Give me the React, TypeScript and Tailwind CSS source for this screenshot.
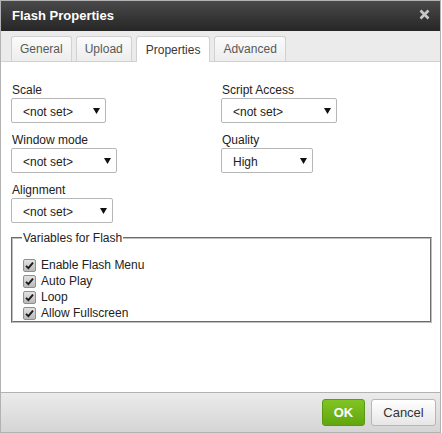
import React from "react";

function Arrow() {
  return (
    <svg width="7" height="7" viewBox="0 0 7 7" className="shrink-0">
      <polygon points="0,1 7,1 3.5,7" fill="#111" />
    </svg>
  );
}

function Select({ value, width }: { value: string; width: number }) {
  return (
    <div
      className="h-[25px] border border-[#b6b6b6] rounded-[2px] bg-white flex items-center justify-between pl-[11px] pr-[5px] text-[12px] text-[#222]"
      style={{ width }}
    >
      <span className="pt-[2px]">{value}</span>
      <Arrow />
    </div>
  );
}

function Field({ label, value, width }: { label: string; value: string; width: number }) {
  return (
    <div className="flex flex-col">
      <div className="text-[12px] leading-[13px] text-[#222] pl-[1px] mb-[1px]">{label}</div>
      <Select value={value} width={width} />
    </div>
  );
}

function Check({ label }: { label: string }) {
  return (
    <div className="flex items-center h-[16px]">
      <div className="w-[13px] h-[13px] rounded-[2px] border border-[#8f8f8f] bg-linear-to-b from-[#e2e2e2] to-[#b9b9b9] flex items-center justify-center">
        <svg width="9" height="9" viewBox="0 0 9 9">
          <path d="M1 4.8 L3.4 7.2 L8 1.6" stroke="#1a1a1a" strokeWidth="1.9" fill="none" />
        </svg>
      </div>
      <span className="ml-[5px] text-[12px] text-[#222]">{label}</span>
    </div>
  );
}

export default function App() {
  const tabs = ["General", "Upload", "Properties", "Advanced"];
  return (
    <div className="w-[442px] h-[433px] bg-white" style={{ fontFamily: '"Liberation Sans", Arial, sans-serif' }}>
      <div className="w-[441px] h-[433px] border border-[#b2b2b2] flex flex-col">
        {/* Title bar */}
        <div className="h-[30px] bg-linear-to-b from-[#4a4a4a] to-[#262626] flex items-center justify-between pl-[11px] pr-[10px] shrink-0">
          <span className="text-white font-bold text-[13px]">Flash Properties</span>
          <svg width="11" height="11" viewBox="0 0 11 11" className="mb-[3px]">
            <path d="M1.5 1.5 L9.5 9.5 M9.5 1.5 L1.5 9.5" stroke="#c8c8c8" strokeWidth="2.6" />
          </svg>
        </div>
        {/* Tabs */}
        <div className="h-[31px] bg-[#ebebeb] border-b border-[#d1d1d1] flex items-end pl-[10px] gap-[4px] shrink-0">
          {tabs.map((t) => {
            const active = t === "Properties";
            return (
              <div
                key={t}
                className={
                  active
                    ? "h-[26px] mb-[-1px] px-[9px] flex items-center bg-white border border-b-0 border-[#d1d1d1] rounded-t-[3px] text-[12px] text-[#383838]"
                    : "h-[25px] px-[8px] flex items-center bg-linear-to-b from-[#fbfbfb] to-[#ededed] border border-b-0 border-[#d1d1d1] rounded-t-[3px] text-[12px] text-[#595959]"
                }
              >
                {t}
              </div>
            );
          })}
        </div>
        {/* Content */}
        <div className="flex-1 bg-white pl-[10px] pr-[8px] pt-[22px]">
          <div className="grid grid-cols-[210px_1fr] gap-y-[11px]">
            <Field label="Scale" value="<not set>" width={95} />
            <Field label="Script Access" value="<not set>" width={116} />
            <Field label="Window mode" value="<not set>" width={106} />
            <Field label="Quality" value="High" width={92} />
            <Field label="Alignment" value="<not set>" width={102} />
            <div />
          </div>
          <fieldset className="mt-[8px] border-2 [border-style:groove] border-[#c0c0c0] w-[421px] px-[10px] pt-[12px] pb-[0px]">
            <legend className="text-[12px] leading-[14px] text-[#222] px-[1px] ml-[-1px]">Variables for Flash</legend>
            <div className="flex flex-col">
              <Check label="Enable Flash Menu" />
              <Check label="Auto Play" />
              <Check label="Loop" />
              <Check label="Allow Fullscreen" />
            </div>
          </fieldset>
        </div>
        {/* Footer */}
        <div className="h-[40px] border-t border-[#b2b2b2] bg-linear-to-b from-[#ebebeb] to-[#d5d5d5] flex items-center justify-end pr-[4px] gap-[6px] shrink-0">
          <div className="h-[27px] w-[43px] rounded-[3px] border border-[#5a9a12] bg-linear-to-b from-[#80c423] to-[#62a60e] flex items-center justify-center text-white font-bold text-[13px]">
            OK
          </div>
          <div className="h-[27px] w-[65px] rounded-[3px] border border-[#b6b6b6] bg-linear-to-b from-white to-[#e6e6e6] flex items-center justify-center text-[#333] text-[13px]">
            Cancel
          </div>
        </div>
      </div>
    </div>
  );
}
